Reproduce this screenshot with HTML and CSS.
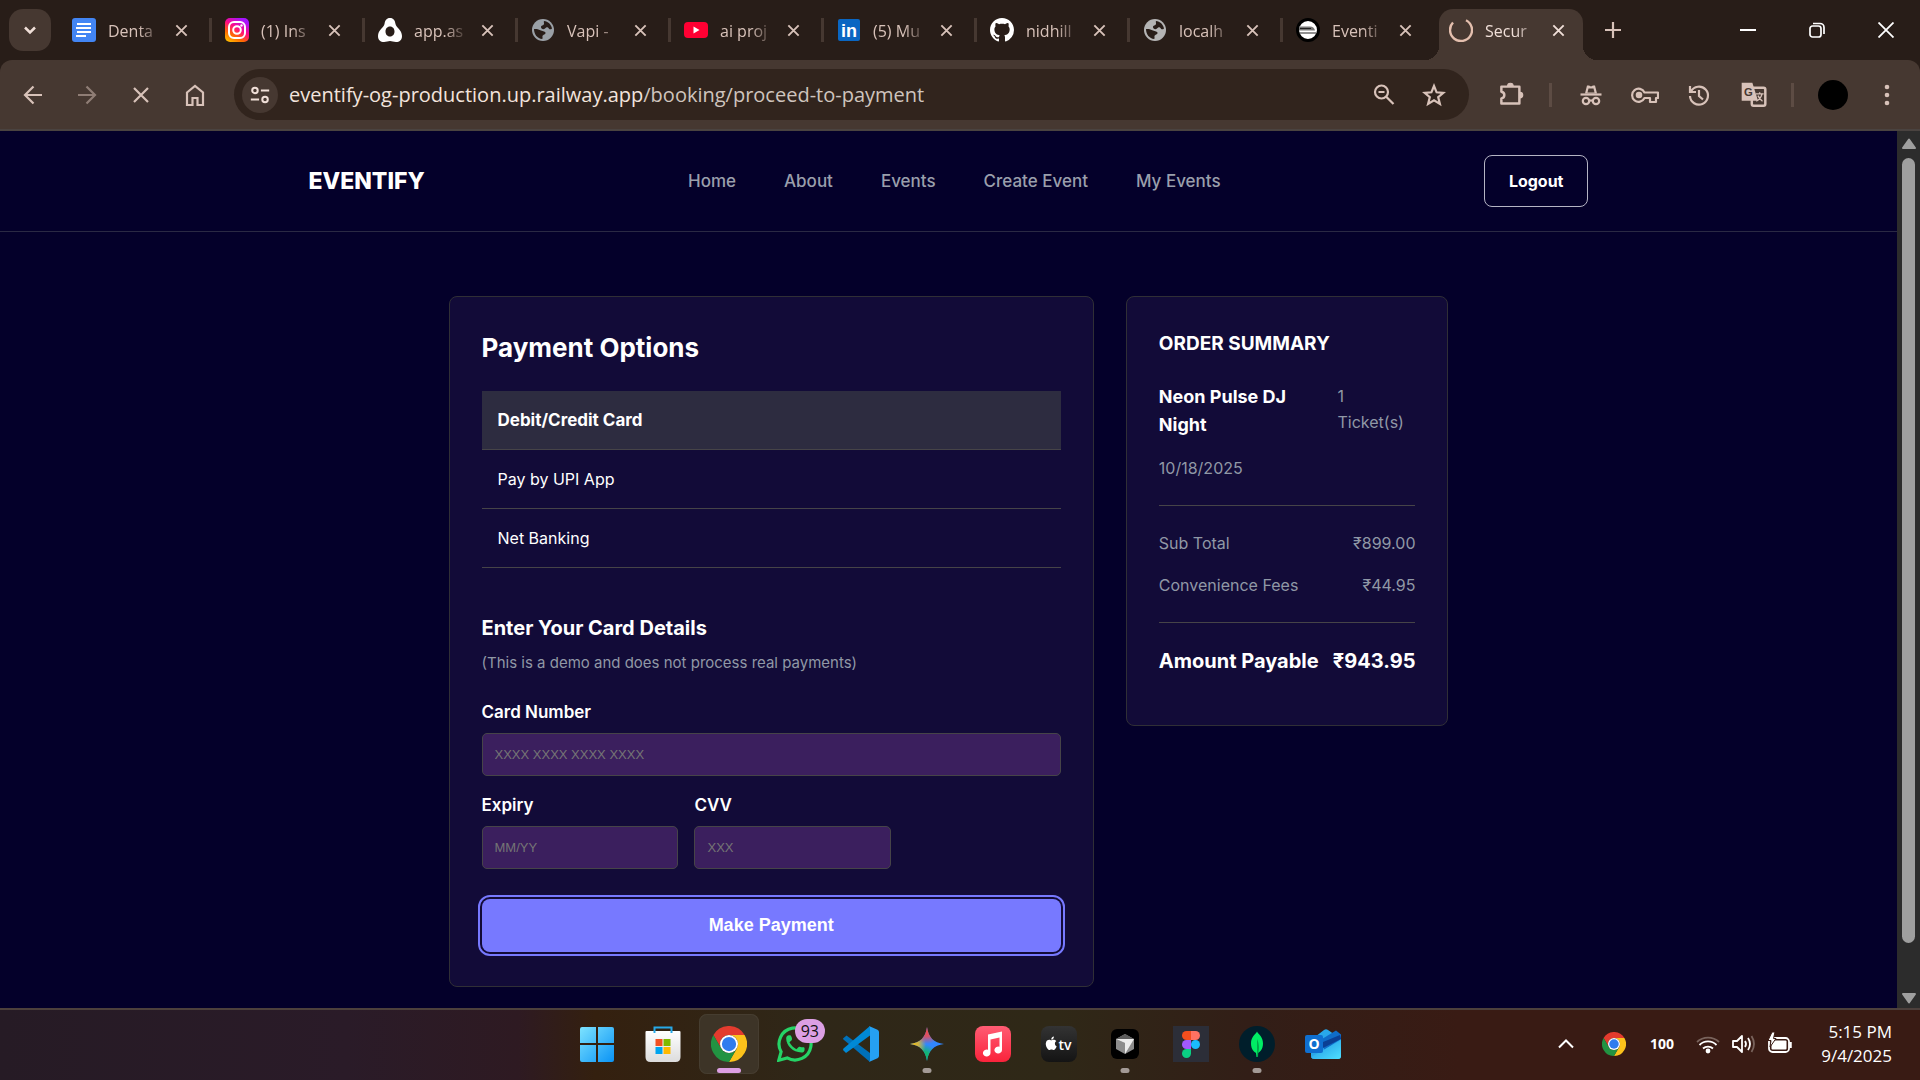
FILE: index.html
```html
<!DOCTYPE html>
<html lang="en">
<head>
<meta charset="utf-8">
<meta name="viewport" content="width=device-width, initial-scale=1">
<title>Secure Payment</title>
<link rel="stylesheet" href="styles.css">
</head>
<body>
<svg class="defs" aria-hidden="true">
  <defs>
    <symbol id="chrome" viewBox="0 0 48 48">
      <path fill="#e33b2e" d="M24 12H44.8A24 24 0 0 0 3.2 12L13.6 30A12 12 0 0 1 24 12Z"/>
      <path fill="#fcc21b" transform="rotate(120 24 24)" d="M24 12H44.8A24 24 0 0 0 3.2 12L13.6 30A12 12 0 0 1 24 12Z"/>
      <path fill="#229342" transform="rotate(240 24 24)" d="M24 12H44.8A24 24 0 0 0 3.2 12L13.6 30A12 12 0 0 1 24 12Z"/>
      <circle cx="24" cy="24" r="12" fill="#fff"/><circle cx="24" cy="24" r="9.5" fill="#2f7bee"/>
    </symbol>
    <symbol id="globe" viewBox="0 0 24 24">
      <circle cx="12" cy="12" r="11" fill="currentColor"/>
      <path fill="#281d18" d="M13 3c4 .3 7.300 3.500 8 7.500-1.500 1.500-3 .8-3.500-.6-.8-1.200-2.500-.4-3.500.6-1.500 1.400-4 .5-4-1.500 0-1.700 2.500-1.300 3-3 .2-1-.5-2 0-3zM3 11c2.500-.3 5 .2 7 1.500 2 1.200 4.500.5 4.500 2.500 0 1.800-2.500 1.500-3 3-.3 1 .5 2-.3 3C6.500 20.600 3 16.500 3 11z"/>
    </symbol>
    <symbol id="close" viewBox="0 0 16 16"><path d="M2.500 2.500l11 11m0-11l-11 11" stroke="currentColor" stroke-width="2" fill="none"/></symbol>
    <linearGradient id="insta" x1="0" y1="1" x2=".6" y2="0"><stop offset="0" stop-color="#ffd000"/><stop offset=".35" stop-color="#ff6a00"/><stop offset=".65" stop-color="#ff0a86"/><stop offset="1" stop-color="#a613ff"/></linearGradient>
    <linearGradient id="win" x1="0" y1="0" x2="1" y2="1"><stop offset="0" stop-color="#7de3ff"/><stop offset="1" stop-color="#0a93f5"/></linearGradient>
    <linearGradient id="bag" x1="0" y1="0" x2="0" y2="1"><stop offset="0" stop-color="#fff"/><stop offset="1" stop-color="#dcdcdc"/></linearGradient>
    <linearGradient id="music" x1="0" y1="0" x2="0" y2="1"><stop offset="0" stop-color="#ff5c74"/><stop offset="1" stop-color="#fa233b"/></linearGradient>
    <linearGradient id="tv" x1="0" y1="0" x2="0" y2="1"><stop offset="0" stop-color="#333"/><stop offset="1" stop-color="#141414"/></linearGradient>
    <radialGradient id="starRed" cx=".5" cy=".05" r=".45"><stop offset="0" stop-color="#ff4641"/><stop offset=".5" stop-color="#ff4641" stop-opacity=".8"/><stop offset="1" stop-color="#ff4641" stop-opacity="0"/></radialGradient>
    <radialGradient id="starYellow" cx=".02" cy=".5" r=".45"><stop offset="0" stop-color="#ffc400"/><stop offset=".5" stop-color="#e8b820" stop-opacity=".85"/><stop offset="1" stop-color="#ffc400" stop-opacity="0"/></radialGradient>
    <radialGradient id="starGreen" cx=".4" cy=".95" r=".45"><stop offset="0" stop-color="#0ebc5f"/><stop offset=".5" stop-color="#0ebc5f" stop-opacity=".85"/><stop offset="1" stop-color="#0ebc5f" stop-opacity="0"/></radialGradient>
    <linearGradient id="mail" x1="0" y1="0" x2="1" y2="1"><stop offset="0" stop-color="#1b8fe0"/><stop offset="1" stop-color="#4fe0ff"/></linearGradient>
  </defs>
</svg>

<header class="browser">
  <div class="tabstrip">
    <button class="tab-search" aria-label="Search tabs"><svg width="16" height="16" viewBox="0 0 16 16"><path d="M3 5.500l5 5 5-5" fill="none" stroke="#f0dfd8" stroke-width="2.500"/></svg></button>
    <div class="tabs" role="tablist">
      <div class="tab sep"><svg class="fav" viewBox="0 0 24 24"><rect width="24" height="24" rx="3" fill="#4285f4"/><path d="M5 6h14M4 10h15M5 14h14M4 18h10" stroke="#fff" stroke-width="2.200"/></svg><span class="title">Denta</span><button class="x" aria-label="Close"><svg><use href="#close"/></svg></button></div>
      <div class="tab sep"><svg class="fav" viewBox="0 0 24 24"><rect width="24" height="24" rx="5" fill="url(#insta)"/><g fill="none" stroke="#fff" stroke-width="2"><rect x="4" y="4" width="16" height="16" rx="5"/><circle cx="12" cy="12" r="3.800"/></g><circle cx="16.500" cy="7.500" r="1.200" fill="#fff"/></svg><span class="title">(1) Ins</span><button class="x" aria-label="Close"><svg><use href="#close"/></svg></button></div>
      <div class="tab sep"><svg class="fav" viewBox="0 0 24 24"><path fill="#fff" fill-rule="evenodd" d="M12 0c3.500 0 5 2.500 5.500 6 .5 3.500 6.500 6 6.500 12 0 4-2.500 6-6 6-2.500 0-4-1-6-1s-3.500 1-6 1c-3.500 0-6-2-6-6C0 12 6 9.500 6.500 6 7 2.500 8.500 0 12 0zm0 8.500c-3 0-4.500 2.500-4.500 5s1.500 5 4.500 5 4.500-2.500 4.500-5-1.500-5-4.500-5z"/></svg><span class="title">app.as</span><button class="x" aria-label="Close"><svg><use href="#close"/></svg></button></div>
      <div class="tab sep"><svg class="fav gray"><use href="#globe"/></svg><span class="title">Vapi -</span><button class="x" aria-label="Close"><svg><use href="#close"/></svg></button></div>
      <div class="tab sep"><svg class="fav" viewBox="0 0 24 24"><rect y="4" width="24" height="16" rx="4" fill="#ff0033"/><path d="M9.500 8.500v7l6-3.500z" fill="#fff"/></svg><span class="title">ai proj</span><button class="x" aria-label="Close"><svg><use href="#close"/></svg></button></div>
      <div class="tab sep"><svg class="fav" viewBox="0 0 24 24"><rect x="1" y="1" width="22" height="22" rx="2" fill="#0a66c2"/><text x="12" y="19" class="in">in</text></svg><span class="title">(5) Mu</span><button class="x" aria-label="Close"><svg><use href="#close"/></svg></button></div>
      <div class="tab sep"><svg class="fav" viewBox="0 0 16 16"><path fill="#fff" d="M8 0C3.580 0 0 3.580 0 8c0 3.540 2.290 6.530 5.470 7.590.4.070.55-.17.55-.38 0-.19-.01-.82-.01-1.490-2.010.37-2.530-.49-2.690-.94-.09-.23-.48-.94-.82-1.130-.28-.15-.68-.52-.01-.53.63-.01 1.080.58 1.230.82.72 1.210 1.870.87 2.330.66.070-.52.28-.87.51-1.070-1.780-.2-3.640-.89-3.640-3.950 0-.87.31-1.590.82-2.150-.08-.2-.36-1.020.08-2.120 0 0 .67-.21 2.200.82.64-.18 1.320-.27 2-.27s1.360.09 2 .27c1.530-1.040 2.200-.82 2.200-.82.44 1.100.16 1.920.08 2.120.51.56.82 1.270.82 2.150 0 3.070-1.870 3.750-3.650 3.950.29.25.54.73.54 1.480 0 1.070-.01 1.930-.01 2.200 0 .21.15.46.55.38A8.010 8.010 0 0 0 16 8c0-4.420-3.580-8-8-8z"/></svg><span class="title">nidhill</span><button class="x" aria-label="Close"><svg><use href="#close"/></svg></button></div>
      <div class="tab sep"><svg class="fav light"><use href="#globe"/></svg><span class="title">localh</span><button class="x" aria-label="Close"><svg><use href="#close"/></svg></button></div>
      <div class="tab"><svg class="fav" viewBox="0 0 24 24"><circle cx="12" cy="12" r="10.500" fill="#fff" stroke="#000" stroke-width="3"/><path d="M3 8.500h11q4 0 5 4H3z" fill="#777"/><path d="M4 10.500h11M3 15h17" stroke="#222" stroke-width="1.200"/></svg><span class="title">Eventi</span><button class="x" aria-label="Close"><svg><use href="#close"/></svg></button></div>
      <div class="tab active"><svg class="fav" viewBox="0 0 24 24"><path d="M4 4.500A11 11 0 1 0 17 2.200" fill="none" stroke="#e4bfae" stroke-width="2.400"/></svg><span class="title">Secur</span><button class="x" aria-label="Close"><svg><use href="#close"/></svg></button></div>
    </div>
    <button class="new-tab" aria-label="New tab"><svg width="16" height="16" viewBox="0 0 16 16"><path d="M8 0v16M0 8h16" stroke="#d8c2b9" stroke-width="2.200"/></svg></button>
    <div class="window-controls">
      <button aria-label="Minimize"><svg width="16" height="16" viewBox="0 0 16 16"><path d="M0 8h16" stroke="#fff" stroke-width="2"/></svg></button>
      <button aria-label="Restore"><svg width="16" height="16" viewBox="0 0 16 16"><g fill="none" stroke="#fff" stroke-width="1.700"><rect x="1" y="4" width="11" height="11" rx="2.500"/><path d="M4 1.500h7a4 4 0 0 1 4 4V12"/></g></svg></button>
      <button aria-label="Close window"><svg width="16" height="16" viewBox="0 0 16 16"><path d="M.5.5l15 15m0-15l-15 15" stroke="#fff" stroke-width="1.800"/></svg></button>
    </div>
  </div>
  <div class="toolbar">
    <div class="nav-buttons">
      <button aria-label="Back"><svg class="ico" viewBox="0 0 24 24"><path d="M21 12H4m8.500-8.500L4 12l8.500 8.500"/></svg></button>
      <button aria-label="Forward" class="dim"><svg class="ico" viewBox="0 0 24 24"><path d="M3 12h17m-8.500-8.500L20 12l-8.500 8.500"/></svg></button>
      <button aria-label="Stop"><svg class="ico" viewBox="0 0 24 24"><path d="M5 5l14 14m0-14L5 19"/></svg></button>
      <button aria-label="Home"><svg class="ico" viewBox="0 0 24 24"><path d="M4 9.500L12 3l8 6.500V22h-5.500v-7h-5v7H4z"/></svg></button>
    </div>
    <div class="omnibox">
      <button class="site-info" aria-label="Site information"><svg class="ico small" viewBox="0 0 24 24"><circle cx="6.500" cy="7" r="3"/><path d="M13 7h9M2 17h9"/><circle cx="17.500" cy="17" r="3"/></svg></button>
      <span class="url"><span class="host">eventify-og-production.up.railway.app</span>/booking/proceed-to-payment</span>
      <button aria-label="Zoom"><svg class="ico" viewBox="0 0 24 24"><circle cx="9.500" cy="9" r="6.500"/><path d="M14 13.500l7.500 7.500M6.500 9h6"/></svg></button>
      <button aria-label="Bookmark this tab"><svg class="ico" viewBox="0 0 24 24"><path d="M12 3l2.600 6.300 6.800.5-5.200 4.400 1.700 6.700L12 17.300l-5.900 3.600 1.700-6.700-5.200-4.400 6.800-.5z"/></svg></button>
    </div>
    <div class="extensions">
      <button aria-label="Extensions"><svg class="ico big" viewBox="0 0 24 24"><path d="M3 5h16v15H3v-4.500c3.500-.5 3.500-5.500 0-6z" stroke-linejoin="round"/><path d="M8.500 4.500a2.500 2.500 0 0 1 5 0zM19.500 10a2.500 2.500 0 0 1 0 5z" fill="#d8c2b9" stroke-width="1"/></svg></button>
      <i class="bar"></i>
      <button aria-label="Incognito"><svg class="ico" viewBox="0 0 24 24"><path d="M1.500 11.500h21"/><path d="M6 10.500l2-8h2l2 1 2-1h2l2 8z" fill="#d8c2b9" stroke="none"/><path d="M9.500 5.500h5l1 4h-7z" fill="#463831" stroke="none"/><circle cx="7" cy="18" r="3.200"/><circle cx="17" cy="18" r="3.200"/><path d="M10 17.500h4"/></svg></button>
      <button aria-label="Passwords"><svg class="ico key" viewBox="0 0 28 24"><path d="M13.500 9.500A6.500 6.500 0 1 0 13.500 15H19v4h6v-4h2V9.500z" stroke-linejoin="round"/><circle cx="8" cy="12" r="2.200" fill="#d8c2b9"/></svg></button>
      <button aria-label="History"><svg class="ico" viewBox="0 0 24 24"><path d="M3 3v6h6M4 8.500A9 9 0 1 1 3 13M12 7v6l4 3.500"/></svg></button>
      <button aria-label="Translate"><svg class="ico big" viewBox="0 0 24 24"><rect x="10.500" y="6" width="12" height="16" rx="1.500"/><path d="M1.500 1.500h9.500l5 16H1.500z" fill="#d8c2b9" stroke="none"/><path d="M14 11.500h7M17.500 10v1.500m2 0c-.5 3-3 5.500-5 6.500m1.500-5c1 2.500 2.500 4 4 5" stroke-width="1.200"/><text x="7.500" y="13.500" class="g">G</text></svg></button>
      <i class="bar"></i>
      <button class="avatar" aria-label="Profile"><span></span></button>
      <button aria-label="Menu"><svg width="24" height="24" viewBox="0 0 24 24" fill="#d8c2b9"><circle cx="12" cy="4" r="2.300"/><circle cx="12" cy="12" r="2.300"/><circle cx="12" cy="20" r="2.300"/></svg></button>
    </div>
  </div>
</header>

<div class="viewport">
  <div class="page">
    <div class="site-header">
      <div class="container">
        <a class="logo" href="#">EVENTIFY</a>
        <nav class="site-nav"><a href="#">Home</a><a href="#">About</a><a href="#">Events</a><a href="#">Create Event</a><a href="#">My Events</a></nav>
        <button class="logout">Logout</button>
      </div>
    </div>
    <main class="checkout">
      <section class="card">
        <h1>Payment Options</h1>
        <ul class="options">
          <li><button class="selected">Debit/Credit Card</button></li>
          <li><button>Pay by UPI App</button></li>
          <li><button>Net Banking</button></li>
        </ul>
        <form>
          <h2>Enter Your Card Details</h2>
          <p class="note">(This is a demo and does not process real payments)</p>
          <div class="field"><label for="num">Card Number</label><input id="num" type="text" placeholder="XXXX XXXX XXXX XXXX"></div>
          <div class="row">
            <div class="field"><label for="exp">Expiry</label><input id="exp" type="text" placeholder="MM/YY"></div>
            <div class="field"><label for="cvv">CVV</label><input id="cvv" type="text" placeholder="XXX"></div>
          </div>
          <button class="pay" type="button">Make Payment</button>
        </form>
      </section>
      <aside class="card summary">
        <h2>ORDER SUMMARY</h2>
        <div class="event"><strong>Neon Pulse DJ Night</strong><span>1<br>Ticket(s)</span></div>
        <p class="date">10/18/2025</p>
        <dl class="costs">
          <div><dt>Sub Total</dt><dd>₹899.00</dd></div>
          <div><dt>Convenience Fees</dt><dd>₹44.95</dd></div>
        </dl>
        <div class="total"><span>Amount Payable</span><span>₹943.95</span></div>
      </aside>
    </main>
  </div>
  <div class="scrollbar" aria-hidden="true">
    <svg width="16" height="12" viewBox="0 0 16 12"><path d="M8 1.500L14 10H2z" fill="#9f9f9f" stroke="#9f9f9f" stroke-width="2" stroke-linejoin="round"/></svg>
    <div class="track"><div class="thumb"></div></div>
    <svg width="16" height="12" viewBox="0 0 16 12"><path d="M8 10.500L14 2H2z" fill="#9f9f9f" stroke="#9f9f9f" stroke-width="2" stroke-linejoin="round"/></svg>
  </div>
</div>

<footer class="taskbar">
  <div class="apps">
    <button aria-label="Start"><svg viewBox="0 0 36 36"><path fill="url(#win)" d="M1 3q0-2 2-2h14v16H1zM19 1h14q2 0 2 2v14H19zM1 19h16v17H3q-2 0-2-2zM19 19h16v15q0 2-2 2H19z"/></svg></button>
    <button aria-label="Store"><svg viewBox="0 0 36 36"><path d="M.5 6q0-1 1-1h33q1 0 1 1v25q0 5-5 5h-25q-5 0-5-5z" fill="url(#bag)"/><path d="M9.500 7V1.500h17V7" fill="none" stroke="#27a9e8" stroke-width="2"/><path fill="#f25022" d="M10.500 13h7v7h-7z"/><path fill="#7fba00" d="M18.500 13h7v7h-7z"/><path fill="#00a4ef" d="M10.500 21h7v7h-7z"/><path fill="#ffb900" d="M18.500 21h7v7h-7z"/></svg></button>
    <button aria-label="Chrome" class="current"><svg><use href="#chrome"/></svg></button>
    <button aria-label="WhatsApp"><svg viewBox="0 0 36 36"><path d="M1.800 34.200l2.300-8.400A16 16 0 1 1 10.200 31.900z" fill="none" stroke="#25d366" stroke-width="3.200"/><path transform="translate(5.500 5) scale(1.050)" fill="#25d366" d="M6.620 10.790c1.440 2.830 3.760 5.140 6.590 6.590l2.200-2.200c.27-.27.67-.36 1.020-.24 1.120.37 2.330.57 3.570.57.55 0 1 .45 1 1V18c0 1.550-1.450 2.500-3 2.500C10 20.500 3.500 14 3.500 7c0-2 1.500-3 2.500-3h1c.55 0 1 .45 1.500 1.500.4 1 .7 1.500.5 2.500-.1.350-.2.740-.5 1.020z"/></svg><span class="badge">93</span></button>
    <button aria-label="VS Code"><svg viewBox="0 0 36 36"><path fill="#0070b8" d="M0 12.500L3.500 9.500 27 27v9L.5 13.500z"/><path fill="#0089d6" d="M0 24l3 3L27 9.500V0L.5 22.500z"/><path fill="#25a0f2" d="M26 0l8.500 3.800Q36 4.500 36 6v24q0 1.500-1.500 2.200L26 36q1-.5 1-2V2q0-1.500-1-2z"/></svg></button>
    <button aria-label="Gemini" class="open"><svg viewBox="0 0 36 36"><path fill="#3186ff" d="M18 1C19.500 11.500 24.500 16.500 35 18 24.500 19.500 19.500 24.500 18 35 16.500 24.500 11.500 19.500 1 18 11.500 16.500 16.500 11.500 18 1z"/><path fill="url(#starGreen)" d="M18 1C19.500 11.500 24.500 16.500 35 18 24.500 19.500 19.500 24.500 18 35 16.500 24.500 11.500 19.500 1 18 11.500 16.500 16.500 11.500 18 1z"/><path fill="url(#starYellow)" d="M18 1C19.500 11.500 24.500 16.500 35 18 24.500 19.500 19.500 24.500 18 35 16.500 24.500 11.500 19.500 1 18 11.500 16.500 16.500 11.500 18 1z"/><path fill="url(#starRed)" d="M18 1C19.500 11.500 24.500 16.500 35 18 24.500 19.500 19.500 24.500 18 35 16.500 24.500 11.500 19.500 1 18 11.500 16.500 16.500 11.500 18 1z"/></svg></button>
    <button aria-label="Music"><svg viewBox="0 0 36 36"><rect width="36" height="36" rx="8" fill="url(#music)"/><path fill="#fff" d="M13 8.500L27 5.500V24a3.800 3.500 0 1 1-2.500-3.300V11.500l-9 2V27a3.800 3.500 0 1 1-2.500-3.300z"/></svg></button>
    <button aria-label="Apple TV"><svg viewBox="0 0 36 36"><rect width="36" height="36" rx="8" fill="url(#tv)"/><path transform="translate(3.500 10.500) scale(.56)" fill="#fff" d="M12.152 6.896c-.948 0-2.415-1.078-3.960-1.040-2.040.027-3.910 1.183-4.961 3.014-2.117 3.675-.546 9.103 1.519 12.090 1.013 1.454 2.208 3.090 3.792 3.039 1.520-.065 2.090-.987 3.935-.987 1.831 0 2.350.987 3.960.948 1.637-.026 2.676-1.480 3.676-2.948 1.156-1.688 1.636-3.325 1.662-3.415-.039-.013-3.182-1.221-3.220-4.857-.026-3.040 2.480-4.494 2.597-4.559-1.429-2.090-3.623-2.324-4.390-2.376-2-.156-3.675 1.090-4.610 1.090zM15.530 3.830c.843-1.012 1.400-2.427 1.245-3.830-1.207.052-2.662.805-3.532 1.818-.78.896-1.454 2.338-1.273 3.714 1.338.104 2.715-.688 3.559-1.701"/><text x="24" y="23.500" class="tv">tv</text></svg></button>
    <button aria-label="Cursor" class="open"><svg viewBox="0 0 36 36"><rect x="4" y="3" width="28" height="30" rx="6" fill="#000"/><path d="M18 8l9 5v10l-9 5-9-5V13z" fill="#8c8c8c"/><path d="M9 13l9-5 9 5-9 4z" fill="#5c5c5c"/><path d="M9 13h18l-9 15V17z" fill="#ececec"/></svg></button>
    <button aria-label="Figma"><svg viewBox="0 0 36 36"><path fill="#2c2e38" d="M0 0h36v36H0z"/><path fill="#f24e1e" d="M18 5h-4.500a4.500 4.500 0 0 0 0 9H18z"/><path fill="#ff7262" d="M18 5h4.500a4.500 4.500 0 0 1 0 9H18z"/><path fill="#a259ff" d="M18 14h-4.500a4.500 4.500 0 0 0 0 9H18z"/><circle cx="22.500" cy="18.500" r="4.500" fill="#1abcfe"/><path fill="#0acf83" d="M18 23h-4.500a4.500 4.500 0 1 0 4.500 4.500z"/></svg></button>
    <button aria-label="MongoDB Compass" class="open"><svg viewBox="0 0 36 36"><circle cx="18" cy="18" r="18" fill="#001e2b"/><path fill="#00ed64" d="M18 5.500c1 2.500 6 5 6 12 0 6-3.500 8.500-5 9.500l-.5 4h-1l-.5-4c-1.500-1-5-3.500-5-9.500 0-7 5-9.500 6-12z"/><path fill="#00a84a" d="M18 13v14l.5 4h.5l.3-4.500c1.200-3 1-9-1.300-13.500z"/></svg></button>
    <button aria-label="Outlook"><svg viewBox="0 0 36 36"><path fill="#28a8ea" d="M6 14L19 4q2-1.500 4 0l13 9v17q0 3-3 3H9q-3 0-3-3z"/><path fill="#0f6cc8" d="M17 13L31 4.500l5 4V13L19 24z"/><path fill="#0a3f94" d="M18 16l17-7 1 4-18 9z"/><path fill="url(#mail)" d="M36 14v16q0 3-3 3H10q-3 0-4-2z"/><rect y="9" width="18" height="18" rx="2" fill="#0f6fd0"/><text x="9" y="22.500" class="o">O</text></svg></button>
  </div>
  <div class="tray">
    <svg width="16" height="10" viewBox="0 0 16 10"><path d="M1 8.500l7-7 7 7" fill="none" stroke="#fff" stroke-width="2"/></svg>
    <svg width="24" height="24"><use href="#chrome"/></svg>
    <span class="count">100</span>
    <div class="status">
      <svg width="24" height="24" viewBox="0 0 24 24" fill="none" stroke="#fff" stroke-width="1.800"><path d="M1 10a16 16 0 0 1 22 0" stroke="#79635c"/><path d="M3.500 13a12 12 0 0 1 17 0M7 16.500a7.500 7.500 0 0 1 10 0"/><circle cx="12" cy="19" r="1.500" fill="#fff"/></svg>
      <svg width="24" height="24" viewBox="0 0 24 24" fill="none" stroke="#fff" stroke-width="1.800"><path d="M1 9v6h4l5 5V4L5 9z" stroke-linejoin="round"/><path d="M13 9q2 3 0 6M16 6q4 6 0 12"/><path d="M19.500 4q5 8 0 16" stroke="#79635c"/></svg>
      <svg width="24" height="24" viewBox="0 0 24 24"><rect x="1" y="6" width="20" height="14" rx="3.500" fill="none" stroke="#fff" stroke-width="1.800"/><rect x="3.500" y="8.500" width="15" height="9" rx="1" fill="#fff"/><path d="M22.500 10v6" stroke="#fff" stroke-width="2.500"/><path d="M4 0L0 8.500h3l-1 6.500 6-8.500H5.500L7 0z" fill="#fff" stroke="#391b14" stroke-width="1"/></svg>
    </div>
    <div class="clock"><time>5:15 PM</time><time>9/4/2025</time></div>
  </div>
</footer>
</body>
</html>
```
FILE: styles.css
```css
* { box-sizing: border-box; margin: 0; padding: 0; }

:root {
  --ui: "Open Sans", "Noto Sans", sans-serif;
  --brand: Inter, "Open Sans", sans-serif;
  --icon: #d8c2b9;
  --line: #464448;
  --muted: #9098a6;
}

body {
  height: 100vh;
  display: flex;
  flex-direction: column;
  overflow: hidden;
  background: #04002a;
  font-family: var(--ui);
  color: #fff;
}

button { border: 0; background: none; color: inherit; font: inherit; cursor: pointer; }
a { color: inherit; text-decoration: none; }
ul { list-style: none; }
svg { display: block; flex: none; }
.defs { width: 0; height: 0; position: absolute; }

/* Browser frame */
.browser { flex: none; background: #281d18; }

.tabstrip { display: flex; align-items: center; height: 60px; padding-left: 9px; }
.tab-search {
  display: grid; place-items: center; flex: none;
  width: 42px; height: 42px; border-radius: 14px; background: #463831;
}
.tabs { display: flex; align-self: stretch; padding: 9px 0 0 11px; }
.tab {
  position: relative;
  display: flex; align-items: center; gap: 12px;
  width: 153px; height: 42px; padding: 0 22px 0 10px;
  color: var(--icon);
}
.tab.sep::after {
  content: ""; position: absolute; right: 3px; top: 9px;
  width: 3px; height: 24px; background: #463831;
}
.fav { width: 24px; height: 24px; }
.fav.gray { color: #9aa0a6; }
.fav.light { color: #b4b4b4; }
.title {
  flex: 1; min-width: 0; padding-top: 2px; white-space: nowrap;
  font-size: 16px; line-height: 24px;
  mask-image: linear-gradient(90deg, #000 60%, rgb(0 0 0 / .15));
}
.tab .x { display: grid; place-items: center; flex: none; width: 24px; height: 24px; margin-left: -2px; }
.tab .x svg { width: 15px; height: 15px; }
.tab.active {
  width: 144px; height: 51px; padding: 0 13px 9px 10px;
  border-radius: 14px 14px 0 0; background: #463831; color: #f0dfd8;
}
.tab.active::before, .tab.active::after {
  content: ""; position: absolute; bottom: 0; width: 14px; height: 14px;
}
.tab.active::before { left: -14px; background: radial-gradient(circle at 0 0, transparent 14px, #463831 14px); }
.tab.active::after { right: -14px; background: radial-gradient(circle at 100% 0, transparent 14px, #463831 14px); }
.in { font: bold 18px "Liberation Sans", sans-serif; fill: #fff; text-anchor: middle; }

.new-tab { display: grid; place-items: center; width: 60px; height: 42px; }
.window-controls { display: flex; align-self: stretch; margin-left: auto; }
.window-controls button { display: grid; place-items: center; width: 69px; }

.toolbar {
  display: flex; align-items: center;
  height: 71px; padding: 0 6px;
  border-bottom: 2px solid #4a4340;
  border-radius: 12px 12px 0 0;
  background: #463831;
}
.toolbar button { display: grid; place-items: center; flex: none; width: 54px; height: 48px; }
.nav-buttons, .extensions { display: flex; align-items: center; }
.dim { opacity: .5; }
.ico { width: 24px; height: 24px; fill: none; stroke: var(--icon); stroke-width: 2.200; }
.ico.small { width: 22px; height: 22px; stroke: #f0dfd8; }
.ico.big { width: 27px; height: 27px; }
.ico.key { width: 28px; }
.g { font: bold 10px "Liberation Sans", sans-serif; fill: #463831; stroke: none; text-anchor: middle; }

.omnibox {
  flex: 1; display: flex; align-items: center;
  height: 51px; margin: 0 15px 0 12px; padding: 0 10px 0 8px;
  border-radius: 26px; background: #31241d;
}
.toolbar .omnibox button { width: 50px; }
.toolbar .omnibox .site-info { width: 36px; height: 36px; border-radius: 50%; background: #463831; }
.url { flex: 1; padding-left: 11px; font-size: 20px; line-height: 28px; color: #cfc4be; white-space: nowrap; }
.host { color: #f3e4dd; }
.bar { width: 3px; height: 24px; margin: 0 12px 0 11px; background: #5d4c44; }
.avatar span { width: 30px; height: 30px; border-radius: 50%; background: #000; }

/* Page area */
.viewport { flex: 1; min-height: 0; display: flex; }
.page { flex: 1; min-width: 0; overflow: hidden; font-family: var(--brand); font-size: 16px; line-height: 26px; }

.site-header { border-bottom: 1px solid #2a2944; }
.container {
  display: flex; align-items: center; justify-content: space-between;
  max-width: 1280px; margin: 0 auto; padding: 24px 0;
}
.logo { font-size: 23px; font-weight: 800; line-height: 32px; }
.site-nav { display: flex; gap: 48px; color: #9a9fac; font-size: 17px; font-weight: 500; }
.logout {
  height: 52px; padding: 0 24px;
  border: 1px solid #b5b4c4; border-radius: 8px; font-weight: 700;
}

.checkout {
  display: grid; grid-template-columns: 2fr 1fr; align-items: start; gap: 32px;
  max-width: 1000px; margin: 0 auto; padding: 64px 0;
}
.card { min-width: 0; padding: 32px; border: 1px solid #302f36; border-radius: 8px; background: #120b38; }
h1 { margin-bottom: 24px; font-size: 26px; line-height: 38px; font-weight: 700; }
h2 { font-size: 20px; line-height: 30px; font-weight: 700; }
.summary h2 { font-size: 19px; }

.options button {
  display: block; width: 100%; padding: 16px;
  border-bottom: 1px solid var(--line); text-align: left;
}
.options .selected { background: #2d2c40; font-size: 17px; font-weight: 700; }

form { margin-top: 45px; }
.note { margin: 8px 0 24px; font-size: 15px; line-height: 24px; color: var(--muted); }
.field { display: flex; flex-direction: column; gap: 8px; }
.field label { font-size: 17px; font-weight: 600; }
.field input {
  width: 100%; height: 43px; padding: 0 12px;
  border: 1px solid var(--line); border-radius: 5px; background: #3b1f5e;
  font: 13px "Liberation Sans", sans-serif; color: #fff;
}
.field input::placeholder { color: #757575; }
.row { display: flex; gap: 16px; margin-top: 16px; }
.row .field { flex: 0 0 34%; }
.pay {
  display: block; width: 100%; height: 53px; margin: 30px 0 2px;
  border-radius: 8px; background: #7779ff;
  outline: 2px solid #7779ff; outline-offset: 2px;
  font: bold 18px "Liberation Sans", sans-serif;
}

.event { display: grid; grid-template-columns: 1fr 78px; gap: 32px; margin-top: 24px; }
.event strong { font-size: 18px; line-height: 28px; }
.event span, .date, .costs { color: var(--muted); }
.date { margin: 16px 0 24px; }
.costs {
  display: flex; flex-direction: column; gap: 16px;
  padding: 24px 0; border: solid var(--line); border-width: 1px 0;
}
.costs div, .total { display: flex; justify-content: space-between; }
.total { margin: 24px 0 18px; font-size: 20px; line-height: 28px; font-weight: 700; }

.scrollbar {
  display: flex; flex-direction: column; align-items: center; gap: 8px;
  width: 23px; padding: 7px 0 4px; background: #2c2c2c;
}
.track { flex: 1; width: 13px; }
.thumb { height: 95%; border-radius: 7px; background: #9f9f9f; }

/* Taskbar */
.taskbar {
  flex: none; display: grid; grid-template-columns: 1fr auto 1fr; align-items: center;
  height: 72px; padding-bottom: 2px; border-top: 2px solid #4d403c;
  background: linear-gradient(90deg, #261b25 0%, #2a1b28 18%, #2e1a22 27%, #34200f 31%, #2f2718 42%, #2f2817 55%, #321e17 65%, #391b14 76%, #391b14 100%);
}
.apps { grid-column: 2; display: flex; gap: 6px; }
.apps button {
  position: relative; display: grid; place-items: center;
  width: 60px; height: 60px; border-radius: 8px;
}
.apps svg { width: 36px; height: 36px; }
.apps .current { background: #3d3427; box-shadow: inset 0 0 0 1px #463d30; }
.apps .current::after, .apps .open::after {
  content: ""; position: absolute; bottom: 1px; left: 50%; translate: -50%;
  width: 9px; height: 5px; border-radius: 3px; background: #a39a96;
}
.apps .current::after { width: 24px; background: #dc9fe4; }
.badge {
  position: absolute; top: 5px; right: 0; height: 24px; padding: 0 6px;
  border-radius: 12px; background: #dc9fe4; color: #111; font-size: 16px; line-height: 24px;
}
.tv { font: 600 14px "Open Sans", sans-serif; fill: #fff; text-anchor: middle; }
.o { font: bold 14px "Open Sans", sans-serif; fill: #fff; text-anchor: middle; }

.tray { justify-self: end; display: flex; align-items: center; padding-right: 28px; }
.count { margin: 0 22px 0 24px; font-size: 14px; line-height: 20px; font-weight: 700; }
.tray > svg + svg { margin-left: 28px; }
.status { display: flex; gap: 12px; }
.clock { display: flex; flex-direction: column; width: 100px; text-align: right; font-size: 17px; line-height: 24px; }
```
